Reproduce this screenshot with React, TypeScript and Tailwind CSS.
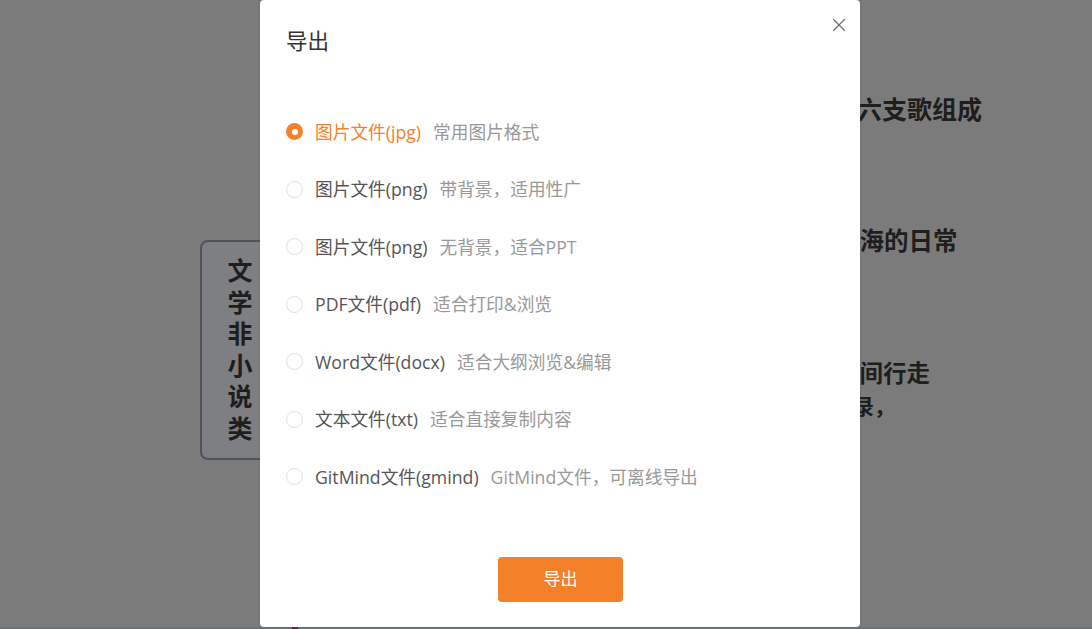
import { X } from "lucide-react";

const options = [
  { label: "图片文件(jpg)", desc: "常用图片格式" },
  { label: "图片文件(png)", desc: "带背景，适用性广" },
  { label: "图片文件(png)", desc: "无背景，适合PPT" },
  { label: "PDF文件(pdf)", desc: "适合打印&浏览" },
  { label: "Word文件(docx)", desc: "适合大纲浏览&编辑" },
  { label: "文本文件(txt)", desc: "适合直接复制内容" },
  { label: "GitMind文件(gmind)", desc: "GitMind文件，可离线导出" },
];

const font = { fontFamily: '"Open Sans", "Noto Sans CJK SC", sans-serif' };

const App = () => {
  const selected = 0;
  return (
    <div
      className="relative w-[1092px] h-[629px] overflow-hidden bg-[#7b7b7b]"
      style={{ fontFamily: '"Noto Sans CJK SC", sans-serif' }}
    >
      {/* mind map behind the overlay */}
      <div className="absolute left-[200px] top-[240px] w-[200px] h-[220px] rounded-[8px] border-2 border-[#4f525a] bg-[#7e7f82] pl-[25px] pt-[16px]">
        <div className="[writing-mode:vertical-rl] text-[25px] leading-[26px] tracking-[6.5px] font-bold text-[#1e1e1e]">
          文学非小说类
        </div>
      </div>
      <div className="absolute left-[782px] top-[92px] text-[25px] leading-[32px] font-bold text-[#1e1e1e] whitespace-nowrap">
        专辑由六支歌组成
      </div>
      <div className="absolute left-[786px] top-[224px] text-[24.5px] leading-[32px] font-bold text-[#1e1e1e] whitespace-nowrap">
        关于大海的日常
      </div>
      <div className="absolute left-[789px] top-[356px] text-[23.5px] leading-[32px] font-bold text-[#1e1e1e] whitespace-nowrap">
        在城市间行走
      </div>
      <div className="absolute left-[790px] top-[390px] text-[21px] leading-[30px] font-bold text-[#1e1e1e] whitespace-nowrap">
        一些记录，
      </div>
      <div className="absolute left-0 top-[627px] w-full h-[2px] bg-[#6f7179]" />
      <div className="absolute left-[292px] top-[627px] w-[6px] h-[2px] bg-[#4a2a52]" />

      {/* modal */}
      <div
        className="absolute left-[260px] top-0 w-[600px] h-[627px] bg-white rounded-[4px] shadow-[0_0_2px_rgba(80,90,110,0.6)] flex flex-col"
        style={font}
      >
        <div className="relative pl-[26px] pt-[26px] h-[55px]">
          <span className="text-[21.5px] leading-[30px] text-[#333333]">导出</span>
          <X
            className="absolute right-[10px] top-[14px] w-[22px] h-[22px] text-[#707070]"
            strokeWidth={1.3}
          />
        </div>
        <div className="flex flex-col pl-[26px] mt-[48px]">
          {options.map((o, i) => {
            const on = i === selected;
            return (
              <div key={i} className="h-[57.5px] flex items-center">
                {on ? (
                  <span className="w-[17px] h-[17px] rounded-full bg-[#f5812a] flex items-center justify-center">
                    <span className="w-[6px] h-[6px] rounded-full bg-white" />
                  </span>
                ) : (
                  <span className="w-[17px] h-[17px] rounded-full border border-[#dcdfe6] bg-white" />
                )}
                <span
                  className={
                    "ml-[12px] text-[17.7px] leading-[24px] " +
                    (on ? "text-[#f5812a]" : "text-[#555555]")
                  }
                >
                  {o.label}
                </span>
                <span className="ml-[12px] text-[17.7px] leading-[24px] text-[#999999]">
                  {o.desc}
                </span>
              </div>
            );
          })}
        </div>
        <div className="flex justify-center mt-[51px]">
          <button className="w-[125px] h-[45px] rounded-[4px] bg-[#f5802a] text-white text-[17px] ml-[1px]">
            导出
          </button>
        </div>
      </div>
    </div>
  );
};

export default App;
